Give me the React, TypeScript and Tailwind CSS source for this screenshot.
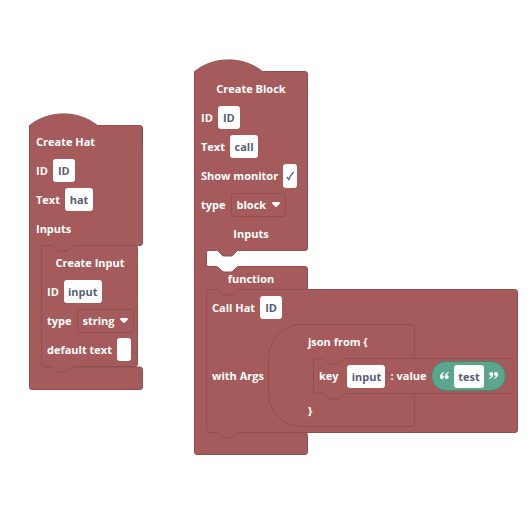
import React from "react";

const FILL = "#a55b5b";
const EDGE = "#905050";

function Label({ children, htmlFor }: { children: React.ReactNode; htmlFor?: string }) {
  return htmlFor ? (
    <label htmlFor={htmlFor} className="shrink-0 whitespace-nowrap">{children}</label>
  ) : (
    <span className="shrink-0 whitespace-nowrap">{children}</span>
  );
}

function Field({ id, value, width, label }: { id?: string; value: string; width: string; label?: string }) {
  return (
    <input
      id={id}
      aria-label={label}
      defaultValue={value}
      className={`h-[23px] shrink-0 rounded-[3px] bg-white p-0 text-center text-[#575e75] outline-none ${width}`}
    />
  );
}

function Dropdown({ id, value, width }: { id: string; value: string; width: string }) {
  return (
    <div className={`relative h-6 shrink-0 ${width}`}>
      <select
        id={id}
        defaultValue={value}
        className="h-6 w-full appearance-none rounded-[3px] border border-[#905050] bg-transparent py-0 pl-[5px] pr-4 outline-none"
      >
        <option>{value}</option>
      </select>
      <svg className="pointer-events-none absolute right-[6px] top-[9px]" width="8" height="6" viewBox="0 0 8 6">
        <path d="M1.400 0h5.200C7.800 0 8.200 1.100 7.500 1.900L4.900 4.600Q4 5.400 3.100 4.600L.5 1.900C-.2 1.100.2 0 1.400 0z" fill="#fff" />
      </svg>
    </div>
  );
}

function Row({ children, center }: { children: React.ReactNode; center?: boolean }) {
  return <div className={`flex h-[29px] items-center gap-[5px] ${center ? "justify-center" : ""}`}>{children}</div>;
}

function Quote({ close }: { close?: boolean }) {
  const d = "M4 0C1.500.8 0 2.500 0 4.700 0 6.200.8 7 2 7s1.900-.8 1.900-1.900S3.200 3.300 2.200 3.300C2.300 2.100 3 1.300 4.200.7zM8.800 0C6.300.8 4.800 2.500 4.800 4.700 4.800 6.200 5.600 7 6.800 7s1.900-.8 1.900-1.900S8 3.300 7 3.300C7.100 2.100 7.800 1.300 9 .7z";
  return (
    <svg width="9" height="7" viewBox="0 0 9 7" className={`-mt-px shrink-0 ${close ? "rotate-180" : ""}`} aria-hidden="true">
      <path d={d} fill="#fff" />
    </svg>
  );
}

function HatStack() {
  return (
    <section className="absolute left-[29px] top-[113px] w-[114px] pt-[14px]">
      <svg className="absolute left-0 top-0" width="115" height="278" viewBox="0 0 115 278" fill={FILL} stroke={EDGE} aria-hidden="true">
        <path d="M.5 12.500C20-3 49-3 68.500 12.500H111q2.500 0 2.500 2.500V130q0 2.500-2.500 2.500H44.500q-1 0-2 1l-3.500 3.500q-1 1-2 1h-7q-1 0-2-1l-3.500-3.500q-1-1-2-1H14.500q-2 0-2 2V252q0 2 2 2H111q2.500 0 2.500 2.500V274q0 2.500-2.500 2.500H3q-2.500 0-2.500-2.500z" />
        <path d="M12.500 134.500q0-2 2-2H22.500q1 0 2 1l3.500 3.500q1 1 2 1h7q1 0 2-1l3.500-3.500q1-1 2-1H106q2.500 0 2.500 2.500V251q0 2.500-2.500 2.500H44.500q-1 0-2 1l-3.500 3.500q-1 1-2 1h-7q-1 0-2-1l-3.500-3.500q-1-1-2-1H14.500q-2 0-2-2z" />
        <path d="M113.500 15V32" stroke="#844949" />
      </svg>
      <div className="relative pl-[7px]">
        <Row><Label>Create Hat</Label></Row>
        <Row><Label htmlFor="hat-id">ID</Label><Field id="hat-id" value="ID" width="w-[22px]" /></Row>
        <Row><Label htmlFor="hat-text">Text</Label><Field id="hat-text" value="hat" width="w-7" /></Row>
        <Row><Label>Inputs</Label></Row>
      </div>
      <div className="relative ml-3 mr-1 px-[6px] pb-[26px] pt-[5px]">
        <Row center><Label>Create Input</Label></Row>
        <Row><Label htmlFor="in-id">ID</Label><Field id="in-id" value="input" width="w-[38px]" /></Row>
        <Row><Label htmlFor="in-type">type</Label><Dropdown id="in-type" value="string" width="w-[57px]" /></Row>
        <Row><Label htmlFor="in-default">default text</Label><Field id="in-default" value="" width="w-[14px]" /></Row>
      </div>
    </section>
  );
}

function ArgsReporter() {
  return (
    <div className="relative h-[103px] w-[246px] shrink-0 pt-[3px]">
      <svg className="absolute left-0 top-0" width="246" height="104" viewBox="0 0 246 104" fill={FILL} stroke={EDGE} aria-hidden="true">
        <path d="M34.500.5H144q2.500 0 2.500 2.500V100q0 2.500-2.500 2.500H34.500C14 102.500.5 87 .5 68V35C.5 16 14 .5 34.500.5z" />
        <path d="M45.500 37q0-2.500 2.500-2.500h6.500q1 0 2 1l3.500 3.500q1 1 2 1h8q1 0 2-1l3.500-3.500q1-1 2-1H243q2.500 0 2.500 2.500V67q0 2.500-2.500 2.500H77.500q-1 0-2 1L72 74q-1 1-2 1h-8q-1 0-2-1l-3.500-3.500q-1-1-2-1H48q-2.500 0-2.500-2.500z" />
      </svg>
      <div className="relative pl-10">
        <Row><Label>{"json from {"}</Label></Row>
        <div className="flex h-10 items-center gap-[5px] pl-[11px]">
          <div className="mr-1"><Label htmlFor="arg-key">key</Label></div>
          <Field id="arg-key" value="input" width="w-[38px]" />
          <Label>: value</Label>
          <div className="flex h-[30px] w-[75px] items-center justify-center gap-[5px] rounded-full border border-[#498470] bg-[#5ba58c]">
            <Quote />
            <Field label="value" value="test" width="w-[30px]" />
            <Quote close />
          </div>
        </div>
        <Row><Label>{"}"}</Label></Row>
      </div>
    </div>
  );
}

function CreateBlockStack() {
  return (
    <section className="absolute left-[194px] top-[59px] w-[325px] pt-[15px]">
      <svg className="absolute left-0 top-0" width="325" height="397" viewBox="0 0 325 397" fill={FILL} stroke={EDGE} aria-hidden="true">
        <path d="M.5 12.500C20-3 49-3 68.500 12.500H111q2.500 0 2.500 2.500V189q0 2.500-2.500 2.500H44.500q-1 0-2 1l-3.500 3.500q-1 1-2 1h-7q-1 0-2-1l-3.500-3.500q-1-1-2-1H14.500q-2 0-2 2V205.500q0 2 2 2H22.500q1 0 2 1l3.500 3.500q1 1 2 1h7q1 0 2-1l3.500-3.500q1-1 2-1H111q2.500 0 2.500 2.500V374H111q2.500 0 2.500 2.500V393q0 2.500-2.500 2.500H3q-2.500 0-2.500-2.500z" />
        <path d="M12.500 232.500q0-2 2-2H22.500q1 0 2 1l3.500 3.500q1 1 2 1h7q1 0 2-1l3.500-3.500q1-1 2-1H321q2.500 0 2.500 2.500V371q0 2.500-2.500 2.500H44.500q-1 0-2 1l-3.500 3.500q-1 1-2 1h-7q-1 0-2-1l-3.500-3.500q-1-1-2-1H14.500q-2 0-2-2z" />
        <path d="M113.500 15V32" stroke="#844949" />
      </svg>
      <div className="relative w-[114px] px-[7px]">
        <Row center><Label>Create Block</Label></Row>
        <Row><Label htmlFor="block-id">ID</Label><Field id="block-id" value="ID" width="w-[22px]" /></Row>
        <Row><Label htmlFor="block-text">Text</Label><Field id="block-text" value="call" width="w-7" /></Row>
        <Row>
          <Label htmlFor="monitor">Show monitor</Label>
          <span className="relative h-6 w-[14px] shrink-0">
            <input id="monitor" type="checkbox" defaultChecked className="block h-6 w-[14px] appearance-none rounded-[3px] bg-white" />
            <svg className="pointer-events-none absolute left-[3px] top-[7px]" width="9" height="10" viewBox="0 0 9 10" fill="none" stroke="#575e75">
              <path d="M.8 5.800L2.800 8.600Q4.500 4 7.800 1" strokeWidth="1.300" />
            </svg>
          </span>
        </Row>
        <Row><Label htmlFor="block-type">type</Label><Dropdown id="block-type" value="block" width="w-[55px]" /></Row>
        <Row center><Label>Inputs</Label></Row>
      </div>
      <div className="relative w-[114px] pt-4">
        <Row center><Label>function</Label></Row>
      </div>
      <div className="relative ml-3 pb-7 pl-[6px]">
        <Row><Label htmlFor="call-id">Call Hat</Label><Field id="call-id" value="ID" width="w-[22px]" /></Row>
        <div className="flex items-center gap-1 pt-[2px]">
          <Label>with Args</Label>
          <ArgsReporter />
        </div>
      </div>
    </section>
  );
}

export default function App() {
  return (
    <main className="relative min-h-screen overflow-hidden bg-white font-['Open_Sans','Noto_Sans',sans-serif] text-[11px] font-bold leading-4 text-white">
      <HatStack />
      <CreateBlockStack />
    </main>
  );
}
